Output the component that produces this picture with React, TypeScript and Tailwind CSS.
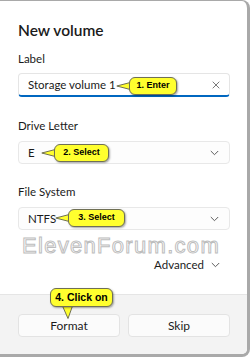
import type { ReactNode } from "react";

const font = { fontFamily: 'Lato, "Noto Sans", sans-serif' };

function Callout({
  className,
  pointer,
  children,
}: {
  className: string;
  pointer: "left" | "down";
  children: ReactNode;
}) {
  return (
    <div className={`absolute ${className}`}>
      {pointer === "left" ? (
        <svg
          className="absolute left-[-13px] top-1/2 -translate-y-1/2"
          width="16"
          height="12"
          viewBox="0 0 16 12"
        >
          <polygon points="16,2 0.8,6 16,10" fill="#ffff2e" />
          <path d="M15 2.3 L0.8 6 L15 9.7" fill="none" stroke="#6f6f55" strokeWidth="1" />
        </svg>
      ) : (
        <svg
          className="absolute bottom-[-12px] left-[11px]"
          width="14"
          height="14"
          viewBox="0 0 14 14"
        >
          <polygon points="1,0 7,13.5 12,0" fill="#ffff2e" />
          <path d="M1.5 1 L7 13.5 L11.5 1" fill="none" stroke="#6f6f55" strokeWidth="1" />
        </svg>
      )}
      <div
        className="relative flex h-full w-full items-center justify-center rounded-[6px] border border-[#6f6f55] bg-[#ffff2e] font-bold text-black shadow-[1px_1px_2px_rgba(0,0,0,0.35)]"
        style={{ fontFamily: '"Liberation Sans", Arial, sans-serif' }}
      >
        {children}
      </div>
    </div>
  );
}

function Chevron() {
  return (
    <svg width="9" height="6" viewBox="0 0 9 6" className="text-[#5c5c5c]">
      <path d="M0.8 1 L4.5 4.7 L8.2 1" fill="none" stroke="currentColor" strokeWidth="1" />
    </svg>
  );
}

export default function App() {
  return (
    <div className="h-[357px] w-[250px] bg-white" style={font}>
      <div className="flex h-full w-full flex-col overflow-hidden rounded-tr-[8px] rounded-br-[8px] border-t border-r-[3px] border-b-[3px] border-[#a9a9a9]">
        {/* body */}
        <div className="flex flex-1 flex-col pl-[18px] pr-[17px] pt-[17px]">
          <div className="h-[24px] text-[15.5px] leading-[24px] font-semibold text-[#1b1b1b]">
            New volume
          </div>

          <div className="mt-[9px] h-[16px] text-[11.5px] leading-[16px] text-[#1b1b1b]">Label</div>
          <div className="relative mt-[6px] flex h-[24px] items-center justify-between rounded-[4px] border border-[#e5e5e5] border-b-2 border-b-[#0067c0] bg-white pl-[9px] pr-[9px]">
            <span className="text-[11.5px] text-[#1b1b1b]">Storage volume 1</span>
            <svg width="8" height="8" viewBox="0 0 8 8">
              <path d="M0.7 0.7 L7.3 7.3 M7.3 0.7 L0.7 7.3" stroke="#7a7a7a" strokeWidth="1" />
            </svg>
            <Callout className="left-[110px] top-[3px] h-[18px] w-[48px] text-[9px]" pointer="left">
              1. Enter
            </Callout>
          </div>

          <div className="mt-[21px] h-[16px] text-[11.5px] leading-[16px] text-[#1b1b1b]">Drive Letter</div>
          <div className="relative mt-[7px] flex h-[23px] items-center justify-between rounded-[4px] border border-[#e8e8e8] bg-[#fdfdfd] pl-[9px] pr-[10px]">
            <span className="text-[11.5px] text-[#1b1b1b]">E</span>
            <Chevron />
            <Callout className="left-[35px] top-[2px] h-[18px] w-[55px] text-[9px]" pointer="left">
              2. Select
            </Callout>
          </div>

          <div className="mt-[20px] h-[16px] text-[11.5px] leading-[16px] text-[#1b1b1b]">File System</div>
          <div className="relative mt-[7px] flex h-[23px] items-center justify-between rounded-[4px] border border-[#e8e8e8] bg-[#fdfdfd] pl-[9px] pr-[10px]">
            <span className="text-[11.5px] text-[#1b1b1b]">NTFS</span>
            <Chevron />
            <Callout className="left-[49px] top-[1px] h-[18px] w-[57px] text-[9px]" pointer="left">
              3. Select
            </Callout>
          </div>

          <div
            className="mt-[5px] h-[22px] pl-[4px] text-[22px] leading-[22px] tracking-[1.3px] text-transparent [-webkit-text-stroke:1px_#bdbdbd]"
            style={{ fontFamily: '"Liberation Sans", Arial, sans-serif' }}
          >
            ElevenForum.com
          </div>

          <div className="mt-[1px] flex h-[14px] items-center justify-end gap-[7px] pr-[10px] text-[11.5px] leading-[14px] text-[#1b1b1b]">
            <span>Advanced</span>
            <Chevron />
          </div>
        </div>

        {/* footer */}
        <div className="relative flex h-[60px] gap-[8px] border-t border-[#e5e5e5] bg-[#f3f3f3] pl-[18px] pr-[17px] pt-[19px]">
          <div className="flex h-[23px] flex-1 items-center justify-center rounded-[4px] border border-[#e3e3e3] bg-[#fbfbfb] text-[12px] text-[#1b1b1b]">
            Format
          </div>
          <div className="flex h-[23px] flex-1 items-center justify-center rounded-[4px] border border-[#e3e3e3] bg-[#fbfbfb] text-[12px] text-[#1b1b1b]">
            Skip
          </div>
          <Callout className="left-[50px] top-[-7px] h-[19px] w-[63px] text-[10.5px]" pointer="down">
            4. Click on
          </Callout>
        </div>
      </div>
    </div>
  );
}
